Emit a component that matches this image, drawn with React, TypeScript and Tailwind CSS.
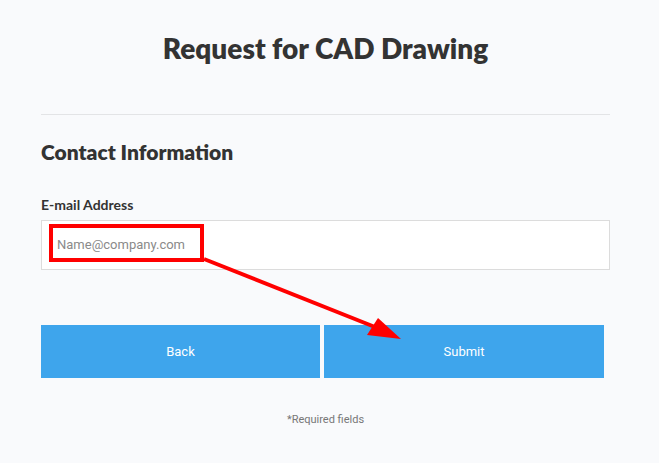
import React from 'react'

export default function App(): React.ReactElement {
  return (
    <div className="relative w-[659px] h-[463px] overflow-hidden bg-[#f9fafc] text-[#333]" style={{ fontFamily: 'Lato, "Open Sans", sans-serif' }}>
      <div className="w-[569px] ml-[41px] flex flex-col">
        {/* Title */}
        <h1 className="h-[96px] pt-[30px] text-center text-[28px] leading-[36px] font-extrabold text-[#333]">
          Request for CAD Drawing
        </h1>
        <div className="h-px bg-[#e3e4e6] mt-[18px]" />

        <h2 className="mt-[23px] text-[21px] leading-[28px] font-extrabold text-[#333]">Contact Information</h2>

        <label className="mt-[30px] text-[14px] leading-[18px] font-bold text-[#333]">E-mail Address</label>
        <div className="mt-[6px] h-[50px] bg-white border border-[#dcdcdc] flex items-center pl-[15px]">
          <span className="text-[13px] text-[#8a8a8a]" style={{ fontFamily: 'Roboto, sans-serif' }}>Name@company.com</span>
        </div>

        {/* Buttons */}
        <div className="mt-[55px] flex gap-[4px] w-[563px]" style={{ fontFamily: 'Roboto, sans-serif' }}>
          <button className="w-[279px] h-[53px] bg-[#3ea5ec] text-white text-[13px]">Back</button>
          <button className="w-[280px] h-[53px] bg-[#3ea5ec] text-white text-[13px]">Submit</button>
        </div>

        <p className="mt-[34px] text-center text-[11px] text-[#777]" style={{ fontFamily: 'Roboto, sans-serif' }}>*Required fields</p>
      </div>

      {/* Annotation overlay */}
      <svg className="absolute inset-0 pointer-events-none" width="659" height="463" viewBox="0 0 659 463">
        <rect x="51" y="226" width="151" height="34" fill="none" stroke="#ff0000" strokeWidth="4" />
        <line x1="204" y1="259" x2="385" y2="331" stroke="#ff0000" strokeWidth="4" />
        <polygon points="401,339 367,335 378,318" fill="#ff0000" />
      </svg>
    </div>
  )
}
